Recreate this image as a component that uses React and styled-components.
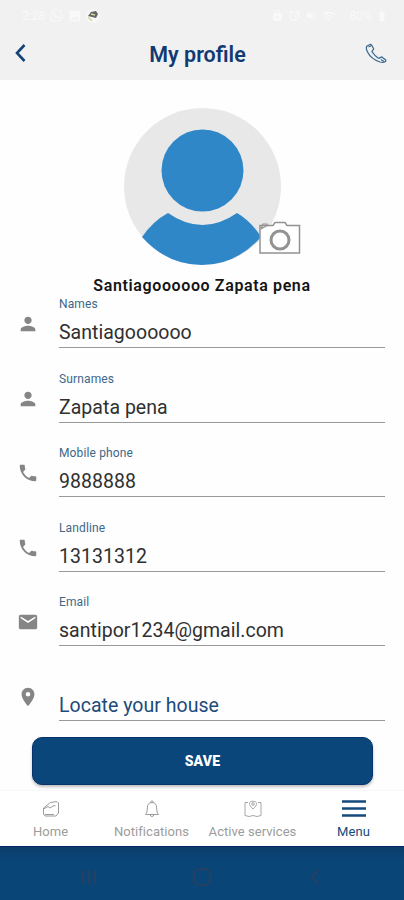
import React from 'react';
import styled, { createGlobalStyle } from 'styled-components';
import {
  MdPerson,
  MdPhone,
  MdEmail,
  MdLocationOn,
  MdWhatsapp,
  MdImage,
  MdLock,
  MdAlarm,
  MdVolumeOff,
  MdWifi,
  MdBatteryFull,
} from 'react-icons/md';

const GlobalStyle = createGlobalStyle`
  * {
    box-sizing: border-box;
  }

  body {
    margin: 0;
    background-color: #fff;
    font-family: Roboto, "Liberation Sans", sans-serif;
  }
`;

const Screen = styled.div`
  width: 404px;
  height: 900px;
  display: flex;
  flex-direction: column;
  overflow: hidden;
  background-color: #fefefe;
`;

const StatusBar = styled.div`
  height: 31px;
  flex-shrink: 0;
  display: flex;
  justify-content: space-between;
  align-items: center;
  padding: 0 16px 0 22px;
  background-color: #f1f1f1;
  color: #f9f9f9;
  font-size: 12px;
`;

const StatusGroup = styled.div`
  display: flex;
  align-items: center;
  gap: ${({ $gap }) => $gap || 4}px;
`;

const StatusText = styled.span`
  margin-left: ${({ $offset }) => $offset || 0}px;
`;

const Header = styled.header`
  height: 49px;
  flex-shrink: 0;
  display: flex;
  justify-content: space-between;
  align-items: flex-start;
  padding: 9px 17px 0 14px;
  background-color: #f1f1f1;
`;

const HeaderButton = styled.button`
  display: flex;
  padding: 3px 0 0;
  border: 0;
  background: none;
`;

const Title = styled.h1`
  margin: 0 0 0 3px;
  color: #103a72;
  font-size: 21.5px;
  line-height: 29px;
  font-weight: 600;
`;

const Content = styled.main`
  height: 710px;
  flex-shrink: 0;
  padding-top: 28px;
  display: flex;
  flex-direction: column;
`;

const AvatarBox = styled.div`
  position: relative;
  align-self: center;
  width: 158px;
  height: 158px;
`;

const CameraButton = styled.button`
  position: absolute;
  left: 135px;
  top: 112px;
  display: flex;
  padding: 0;
  border: 0;
  background: none;
`;

const FullName = styled.div`
  height: 30px;
  padding-top: 9px;
  text-align: center;
  color: #151515;
  font-size: 16px;
  line-height: 22px;
  font-weight: 600;
  letter-spacing: 0.62px;
`;

const Form = styled.form`
  display: flex;
  flex-direction: column;
  gap: 22.6px;
`;

const Field = styled.div`
  display: flex;
  height: 52px;
  padding-right: 19px;
`;

const FieldIcon = styled.div`
  width: 59px;
  padding: 17px 0 0 17px;
  color: #858585;
  font-size: 22px;
  line-height: 0;
`;

const FieldBody = styled.div`
  flex: 1;
  display: flex;
  flex-direction: column;
  justify-content: space-between;
  border-bottom: 1px solid #999;
`;

const Label = styled.label`
  height: 16px;
  color: #3d6889;
  font-size: 12px;
  line-height: 16px;
  letter-spacing: 0.14px;
`;

const Value = styled.div`
  padding-bottom: 2px;
  color: ${({ $link }) => ($link ? '#1c4b79' : '#303030')};
  font-size: 19.5px;
  line-height: 24px;
  letter-spacing: 0.03px;
`;

const SaveButton = styled.button`
  width: 341px;
  height: 48px;
  margin: 16px 0 0 32px;
  border: 1px solid #06326d;
  border-radius: 10px;
  background-color: #0a4679;
  box-shadow: 0 2px 3px rgba(0, 0, 0, 0.25);
  color: #fff;
  font-family: inherit;
  font-size: 14px;
  font-weight: 900;
  letter-spacing: 0.2px;
`;

const TabBar = styled.nav`
  height: 56px;
  flex-shrink: 0;
  display: grid;
  grid-template-columns: repeat(4, 1fr);
  border-top: 1px solid #f7f7f7;
  background-color: #fff;
`;

const Tab = styled.div`
  display: flex;
  flex-direction: column;
  align-items: center;
  padding-top: 7px;
  gap: 3px;
  color: ${({ $active }) => ($active ? '#154b7b' : '#9c9c9c')};
  font-size: 13px;
  line-height: 18px;
  letter-spacing: 0.05px;
  white-space: nowrap;

  svg {
    height: 22px;
  }
`;

const SystemBar = styled.div`
  flex: 1;
  display: grid;
  grid-template-columns: 113px 113px 113px;
  justify-content: center;
  align-items: center;
  justify-items: center;
  padding-top: 7px;
  border-top: 1px solid #082667;
  background: linear-gradient(#0b3d68, #0a4577 12px);
`;

const Avatar = () => (
  <svg width="158" height="158" viewBox="0 0 158 158">
    <circle cx="79.500" cy="78.500" r="78.500" fill="#e8e8e8" />
    <circle cx="79.500" cy="62.500" r="41" fill="#2f87c8" />
    <path
      d="M45 105 Q79.500 129 114 105 Q128 113 138 129 Q113 157 79 157 Q44 157 19 129 Q30 113 45 105Z"
      fill="#2f87c8"
    />
  </svg>
);

const CameraIcon = () => (
  <svg width="44" height="36" viewBox="0 0 44 36" fill="none" stroke="#929292" strokeWidth="1.500">
    <path d="M2 5.500H15L17 2.500H27L29 5.500H41.500V33H2V5.500Z" fill="#fff" />
    <path d="M3 9L5 4H9L10 6M3 9L9 5.500" strokeWidth="1.200" />
    <circle cx="22" cy="20" r="9" strokeWidth="3" />
  </svg>
);

const HandsetIcon = () => (
  <svg width="22" height="22" viewBox="0 0 22 22" fill="none" stroke="#3d6b91" strokeWidth="1.300" strokeLinejoin="round">
    <path d="M2 3L5 1.500Q6 1.300 6.700 2.300L8.500 5.500Q9 6.500 7.500 7.500Q6.500 8.500 8 10Q10 13 13 15Q14.500 15.500 15.500 14.500Q16.500 13.500 17.500 14.500L20.500 16.700Q21 17.500 20.500 18.500Q18.500 20 15 19Q6 16 2.500 9Q0.500 5 2 3Z" />
    <path d="M3.500 4L6.500 2.500M16 16.500L19 18.500" />
  </svg>
);

const BellIcon = () => (
  <svg width="18" height="22" viewBox="0 0 18 22" fill="none" stroke="currentColor" strokeWidth="1">
    <path d="M2.500 16.500C4 15 4.300 13 4.300 10C4.300 6.500 6 4.500 9 4.500C12 4.500 13.700 6.500 13.700 10C13.700 13 14 15 15.500 16.500Z" />
    <path d="M7.500 4.500C7.500 2.500 10.500 2.500 10.500 4.500M7.200 17C7.500 19 10.500 19 10.800 17" />
  </svg>
);

const HomeIcon = () => (
  <svg width="20" height="22" viewBox="0 0 20 22" fill="none" stroke="currentColor" strokeWidth="1">
    <path d="M2.500 10L9.500 4.500L16 3.500L17.500 5V15L15 18H4L2.500 16Z" />
    <path d="M2.500 11L7 8.500L9 10L13 7.500L14.500 8M4 16.500H13" />
  </svg>
);

const ServicesIcon = () => (
  <svg width="20" height="22" viewBox="0 0 20 22" fill="none" stroke="currentColor" strokeWidth="0.900">
    <path d="M5 4.500H2V17.500L6 18.500L10 17.500L14 18.500L18 17.500V4.500H15" />
    <path d="M10 11C7 8 6.500 7 6.500 5.500C6.500 2.500 13.500 2.500 13.500 5.500C13.500 7 13 8 10 11Z" />
    <circle cx="10" cy="6" r="1.300" />
  </svg>
);

const MenuIcon = () => (
  <svg width="24" height="22" viewBox="0 0 24 22" fill="none" stroke="currentColor" strokeWidth="2.400">
    <path d="M0 3.500H24M0 10.500H24M0 17.500H24" />
  </svg>
);

const FIELDS = [
  { label: 'Names', value: 'Santiagoooooo', icon: MdPerson },
  { label: 'Surnames', value: 'Zapata pena', icon: MdPerson },
  { label: 'Mobile phone', value: '9888888', icon: MdPhone },
  { label: 'Landline', value: '13131312', icon: MdPhone },
  { label: 'Email', value: 'santipor1234@gmail.com', icon: MdEmail },
  { label: '', value: 'Locate your house', icon: MdLocationOn, link: true },
];

const App = () => (
  <Screen>
    <GlobalStyle />
    <StatusBar>
      <StatusGroup>
        <StatusText>2:28</StatusText>
        <MdWhatsapp size={15} />
        <MdImage size={14} />
        <svg width="14" height="14" viewBox="0 0 14 14">
          <circle cx="7" cy="7" r="7" fill="#f8f8f8" />
          <path d="M2 7L5 3L10 2L12 5L10 9L6 8Z" fill="#666" />
          <path d="M2 8L6 12M5 5L9 6" stroke="#d6d8a0" strokeWidth="1.500" />
        </svg>
      </StatusGroup>
      <StatusGroup>
        <MdLock size={13} />
        <MdAlarm size={13} />
        <MdVolumeOff size={13} />
        <MdWifi size={14} />
        <StatusText $offset={10}>80%</StatusText>
        <MdBatteryFull size={12} />
      </StatusGroup>
    </StatusBar>
    <Header>
      <HeaderButton aria-label="Back">
        <svg width="13" height="20" viewBox="0 0 13 20" fill="none" stroke="#154377" strokeWidth="2.600">
          <path d="M10.500 2L3 10L10.500 18" />
        </svg>
      </HeaderButton>
      <Title>My profile</Title>
      <HeaderButton aria-label="Call">
        <HandsetIcon />
      </HeaderButton>
    </Header>
    <Content>
      <AvatarBox>
        <Avatar />
        <CameraButton aria-label="Change photo">
          <CameraIcon />
        </CameraButton>
      </AvatarBox>
      <FullName>Santiagoooooo Zapata pena</FullName>
      <Form>
        {FIELDS.map(({ label, value, icon: Icon, link }) => (
          <Field key={value}>
            <FieldIcon>
              <Icon />
            </FieldIcon>
            <FieldBody>
              <Label>{label}</Label>
              <Value $link={link}>{value}</Value>
            </FieldBody>
          </Field>
        ))}
      </Form>
      <SaveButton>SAVE</SaveButton>
    </Content>
    <TabBar>
      <Tab>
        <HomeIcon />
        Home
      </Tab>
      <Tab>
        <BellIcon />
        Notifications
      </Tab>
      <Tab>
        <ServicesIcon />
        Active services
      </Tab>
      <Tab $active>
        <MenuIcon />
        Menu
      </Tab>
    </TabBar>
    <SystemBar>
      <svg width="16" height="16" viewBox="0 0 16 16" stroke="#303f5b" strokeWidth="1.500">
        <path d="M2 1V15M8 1V15M14 1V15" />
      </svg>
      <svg width="20" height="20" viewBox="0 0 20 20" fill="none" stroke="#303f5b" strokeWidth="1.500">
        <rect x="2" y="2" width="16" height="16" rx="6" />
      </svg>
      <svg width="10" height="16" viewBox="0 0 10 16" fill="none" stroke="#303f5b" strokeWidth="1.500">
        <path d="M8.500 1L2 8L8.500 15" />
      </svg>
    </SystemBar>
  </Screen>
);

export default App;
